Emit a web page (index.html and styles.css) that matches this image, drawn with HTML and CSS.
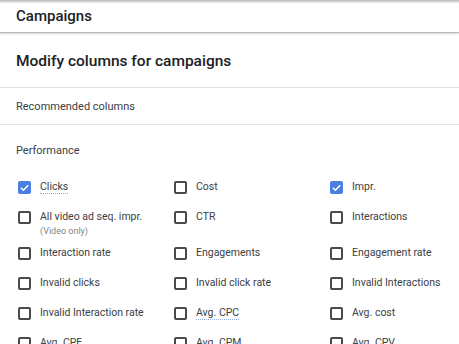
FILE: index.html
```html
<!DOCTYPE html>
<html>
    <head>
        <title>Modify columns</title>
        <link rel="stylesheet" href="styles.css">
    </head>
    <body>
        <!-- Page header -->
        <div class="topbar">Campaigns</div>

        <!-- Dialog -->
        <div class="dialog-title">Modify columns for campaigns</div>
        <div class="section-head">Recommended columns</div>

        <div class="group">
            <div class="group-title">Performance</div>
            <div class="grid">
                <div class="item"><span class="box checked"></span><div class="text"><span class="label dotted">Clicks</span></div></div>
                <div class="item"><span class="box"></span><div class="text"><span class="label">Cost</span></div></div>
                <div class="item"><span class="box checked"></span><div class="text"><span class="label">Impr.</span></div></div>

                <div class="item"><span class="box"></span><div class="text"><span class="label">All video ad seq. impr.</span><div class="sub">(Video only)</div></div></div>
                <div class="item"><span class="box"></span><div class="text"><span class="label">CTR</span></div></div>
                <div class="item"><span class="box"></span><div class="text"><span class="label">Interactions</span></div></div>

                <div class="item"><span class="box"></span><div class="text"><span class="label">Interaction rate</span></div></div>
                <div class="item"><span class="box"></span><div class="text"><span class="label">Engagements</span></div></div>
                <div class="item"><span class="box"></span><div class="text"><span class="label">Engagement rate</span></div></div>

                <div class="item"><span class="box"></span><div class="text"><span class="label">Invalid clicks</span></div></div>
                <div class="item"><span class="box"></span><div class="text"><span class="label">Invalid click rate</span></div></div>
                <div class="item"><span class="box"></span><div class="text"><span class="label">Invalid Interactions</span></div></div>

                <div class="item"><span class="box"></span><div class="text"><span class="label">Invalid Interaction rate</span></div></div>
                <div class="item"><span class="box"></span><div class="text"><span class="label dotted">Avg. CPC</span></div></div>
                <div class="item"><span class="box"></span><div class="text"><span class="label">Avg. cost</span></div></div>

                <div class="item"><span class="box"></span><div class="text"><span class="label">Avg. CPE</span></div></div>
                <div class="item"><span class="box"></span><div class="text"><span class="label">Avg. CPM</span></div></div>
                <div class="item"><span class="box"></span><div class="text"><span class="label">Avg. CPV</span></div></div>
            </div>
        </div>
    </body>
</html>
```

FILE: styles.css
```css
body{
    font-family: Roboto, "Liberation Sans", Arial, sans-serif;
    margin: 0;
    padding: 0;
    background-color: #fff;
    color: #3c4043;
    overflow: hidden;
}
.topbar{
    height: 33px;
    box-sizing: border-box;
    padding: 7px 16px 0;
    line-height: 18px;
    font-size: 15px;
    font-weight: 500;
    color: #202124;
    border-bottom: 1px solid #b8b8b8;
    box-shadow: inset 0 3px 2px -1px rgba(0,0,0,0.25), 0 1px 2px rgba(0,0,0,0.18);
}
.dialog-title{
    height: 55px;
    box-sizing: border-box;
    padding: 18px 16px 0;
    line-height: 20px;
    font-size: 15.5px;
    font-weight: 500;
    color: #202124;
    border-bottom: 1px solid #e2e2e2;
}
.section-head{
    padding: 10px 16px 8px;
    line-height: 18px;
    font-size: 11px;
    border-bottom: 1px solid #e2e2e2;
}
.group{
    padding: 17px 0 0 18px;
}
.group-title{
    margin-left: -2px;
    line-height: 18px;
    font-size: 11px;
    margin-bottom: 13px;
}
.grid{
    display: grid;
    grid-template-columns: 156px 156px 156px;
}
.item{
    display: flex;
    align-items: flex-start;
    gap: 9px;
    min-height: 30px;
    box-sizing: border-box;
    padding: 7px 0 2px;
}
.box{
    flex: none;
    width: 13px;
    height: 13px;
    margin-top: 1px;
    box-sizing: border-box;
    border: 2px solid #4a4a4a;
    border-radius: 2px;
}
.box.checked{
    border: none;
    background-color: #4a7fe0;
    background-image: url("data:image/svg+xml,%3Csvg xmlns='http://www.w3.org/2000/svg' viewBox='0 0 13 13'%3E%3Cpath d='M3 6.8l2.4 2.4 4.8-5' fill='none' stroke='white' stroke-width='1.6'/%3E%3C/svg%3E");
}
.text{
    font-size: 10.5px;
    line-height: 14px;
}
.label{
    display: inline-block;
    vertical-align: top;
}
.dotted{
    line-height: 13px;
    border-bottom: 1px dotted #8fa8e8;
}
.sub{
    margin-top: 1px;
    font-size: 9px;
    line-height: 12px;
    color: #80868b;
}
```
